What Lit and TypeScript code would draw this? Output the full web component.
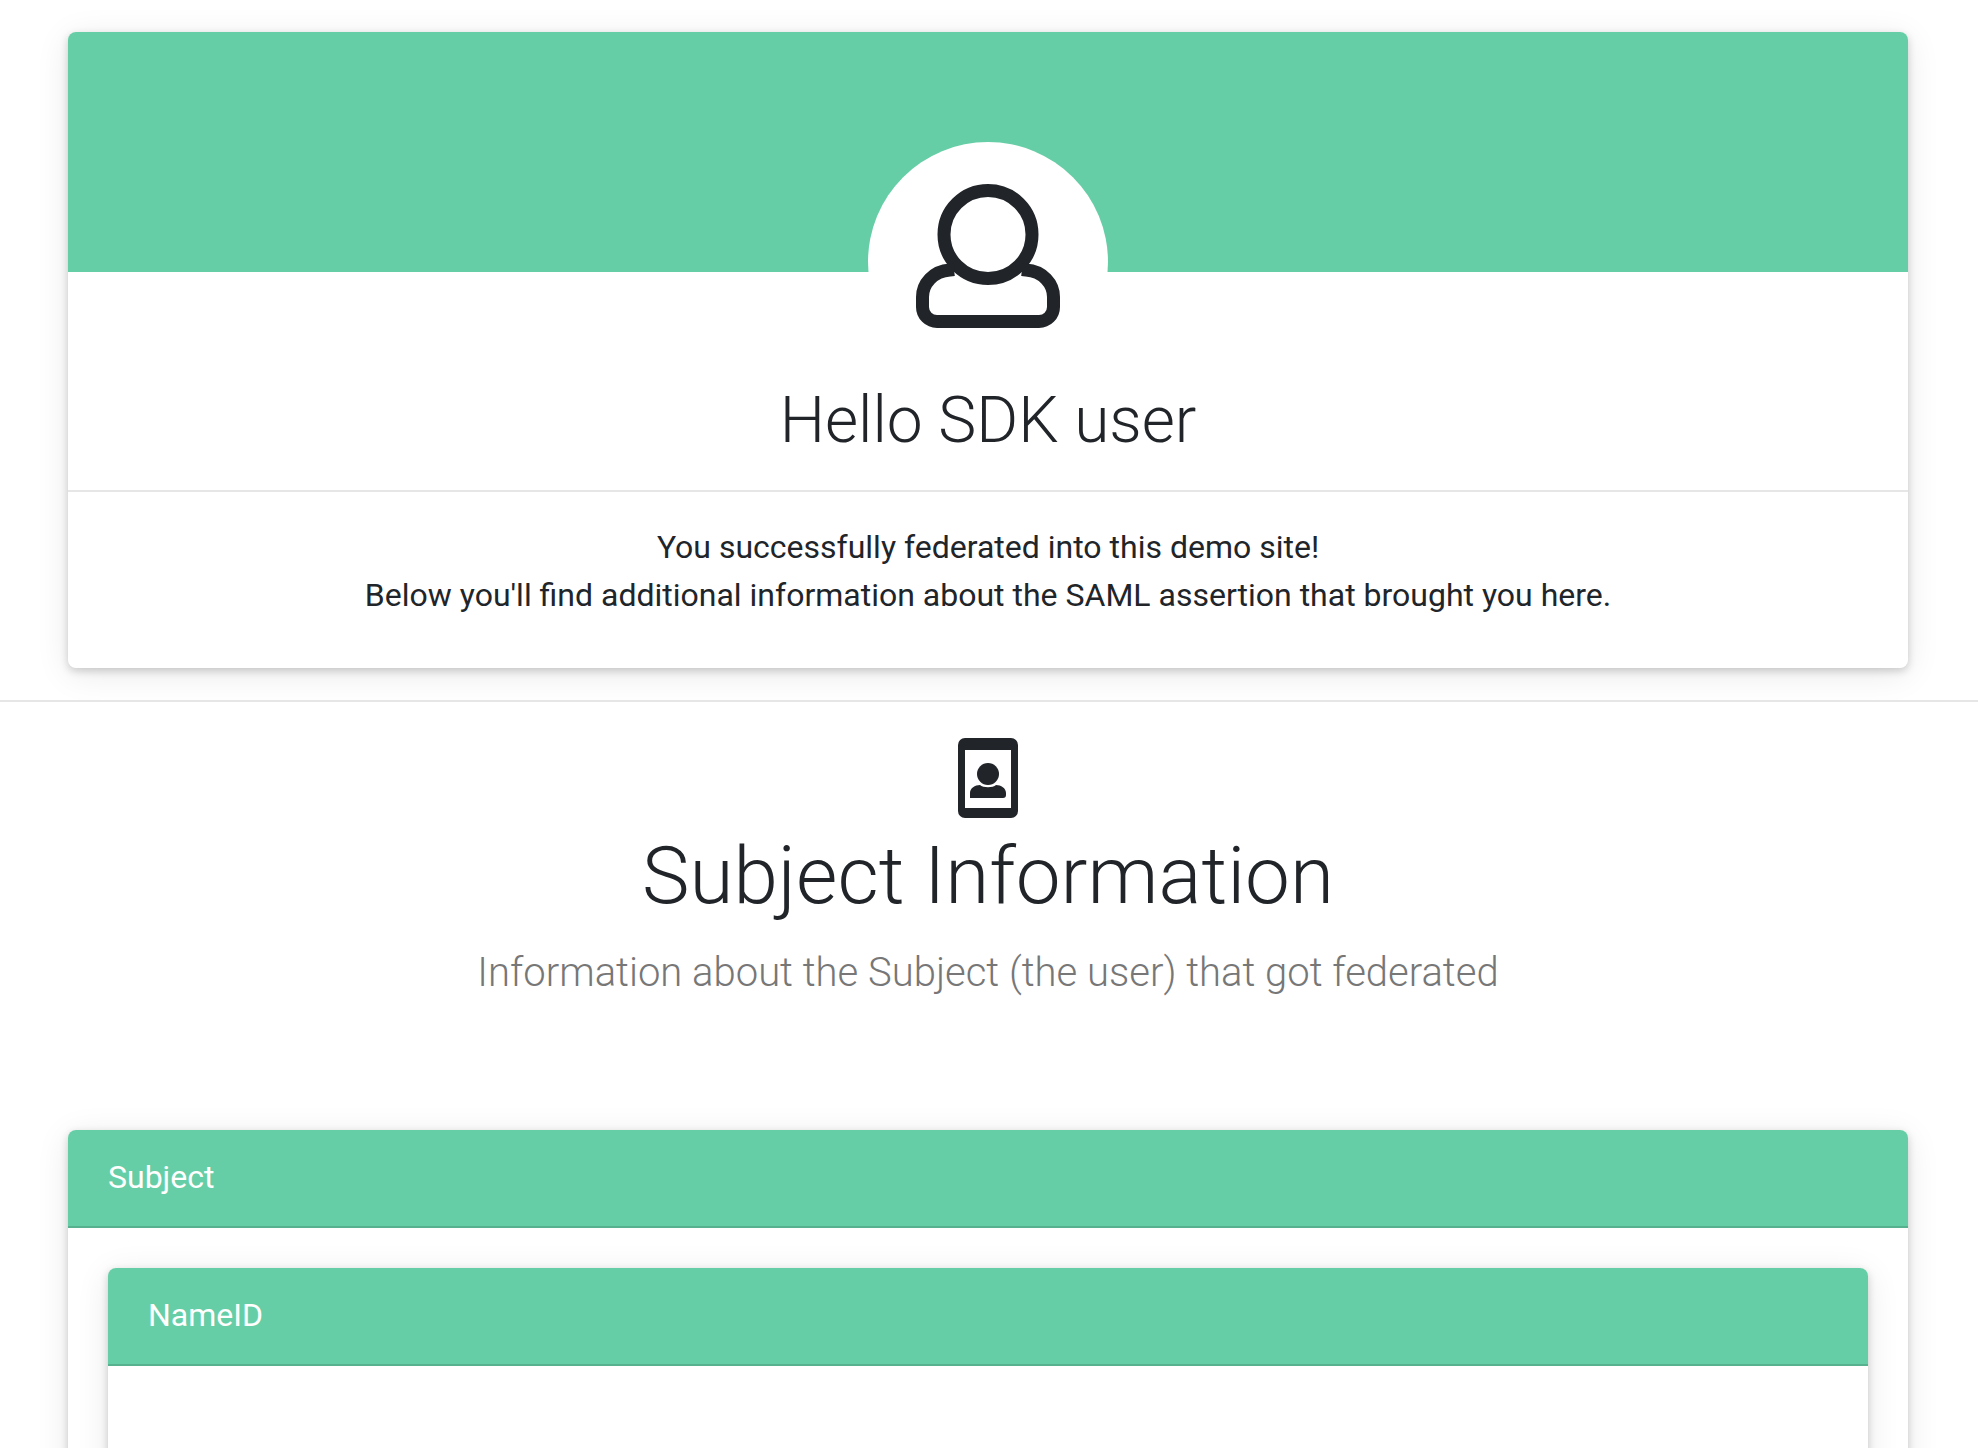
import { LitElement, css, html } from "lit";
import { customElement } from "lit/decorators.js";

@customElement("app-root")
export class AppRoot extends LitElement {
  static styles = css`
    :host {
      display: block;
      height: 1448px;
      overflow: hidden;
      background: #fff;
      color: #212529;
      font-family: Roboto, "Liberation Sans", sans-serif;
      font-size: 32px;
      line-height: 48px;
    }
    .wrap { padding: 32px 70px 0 68px; }
    .wrap.flush { padding-top: 0; }
    .card {
      background: #fff;
      border-radius: 8px;
      box-shadow: 0 3px 8px rgba(0, 0, 0, 0.18), 0 6px 34px rgba(0, 0, 0, 0.09);
    }
    .hero { height: 636px; }
    .banner {
      position: relative;
      height: 240px;
      background: #66cea6;
      border-radius: 8px 8px 0 0;
    }
    .avatar {
      position: absolute;
      left: 800px;
      top: 110px;
      width: 240px;
      height: 240px;
      border-radius: 50%;
      background: #fff;
    }
    .avatar svg { position: absolute; left: 48px; top: 42px; }
    .hero h2 {
      margin: 0;
      height: 220px;
      padding-top: 111px;
      box-sizing: border-box;
      font-size: 64px;
      line-height: 76px;
      font-weight: 300;
      text-align: center;
      border-bottom: 2px solid #e6e6e6;
    }
    .hero p {
      margin: 0;
      padding-top: 31px;
      text-align: center;
      font-size: 32px;
    }
    .rule {
      margin: 32px 0 0;
      height: 2px;
      background: #e6e6e6;
    }
    .section {
      display: flex;
      flex-direction: column;
      align-items: center;
      padding: 36px 2px 0 0;
      height: 428px;
      box-sizing: border-box;
    }
    .section svg { display: block; }
    .section h1 {
      margin: 10px 0 0;
      font-size: 80px;
      line-height: 96px;
      font-weight: 300;
    }
    .section p {
      margin: 19px 0 0;
      font-size: 40px;
      line-height: 60px;
      font-weight: 300;
      color: #777;
    }
    .head {
      height: 98px;
      box-sizing: border-box;
      padding: 23px 40px;
      background: #66cea6;
      border-bottom: 2px solid #57b08e;
      border-radius: 8px 8px 0 0;
      color: #fff;
    }
    .outer { padding-bottom: 40px; }
    .outer-body { padding: 40px; }
    .inner-body { height: 400px; }
  `;

  render() {
    return html`
      <div class="wrap">
        <div class="card hero">
          <div class="banner">
            <div class="avatar">
              <svg width="144" height="144" viewBox="0 0 144 144" fill="none" stroke="#212529" stroke-width="13">
                <circle cx="72" cy="50.5" r="44"></circle>
                <path d="M38 85.5L34 86C17 87 6.5 100 6.5 113V123a14.5 14.5 0 0 0 14.5 14.5H123a14.5 14.5 0 0 0 14.5-14.5V113C137.5 100 127 87 110 86L106 85.5"></path>
              </svg>
            </div>
          </div>
          <h2>Hello SDK user</h2>
          <p>You successfully federated into this demo site!<br />Below you'll find additional information about the SAML assertion that brought you here.</p>
        </div>
      </div>
      <div class="rule"></div>
      <div class="section">
        <svg width="60" height="80" viewBox="0 0 60 80">
          <path fill="#212529" fill-rule="evenodd" d="M7 0H53a7 7 0 0 1 7 7V73a7 7 0 0 1-7 7H7a7 7 0 0 1-7-7V7a7 7 0 0 1 7-7ZM7 12V70H53V12Z"></path>
          <path fill="#212529" d="M12 60V55C12 50 17 47 22 47C25 50 35 50 38 47C43 47 48 50 48 55V57a3 3 0 0 1-3 3Z"></path>
          <circle cx="30" cy="36" r="11" fill="#212529"></circle>
        </svg>
        <h1>Subject Information</h1>
        <p>Information about the Subject (the user) that got federated</p>
      </div>
      <div class="wrap flush">
        <div class="card outer">
          <div class="head">Subject</div>
          <div class="outer-body">
            <div class="card">
              <div class="head">NameID</div>
              <div class="inner-body"></div>
            </div>
          </div>
        </div>
      </div>
    `;
  }
}
